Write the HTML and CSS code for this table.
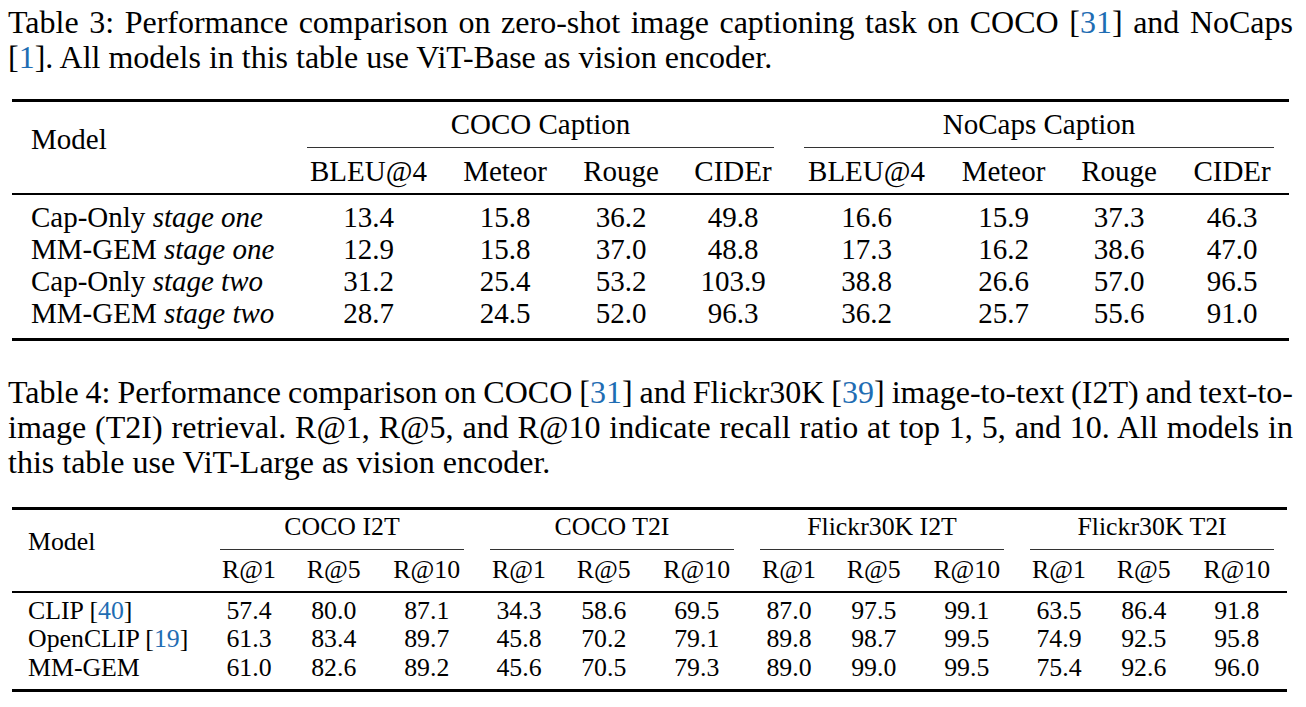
FILE: index.html
```html
<!DOCTYPE html>
<html lang="en">
<head>
<meta charset="utf-8">
<title>Tables 3 and 4</title>
<link rel="stylesheet" href="styles.css">
</head>
<body>
<div class="page">
  <p class="caption">
    <span class="line just">Table 3: Performance comparison on zero-shot image captioning task on COCO [<span class="cite">31</span>] and NoCaps</span>
    <span class="line">[<span class="cite">1</span>]. All models in this table use ViT-Base as vision encoder.</span>
  </p>

  <table class="tbl t1">
    <colgroup>
      <col class="c-model">
      <col class="c-bleu"><col class="c-meteor"><col class="c-rouge"><col class="c-cider">
      <col class="c-bleu2"><col class="c-meteor2"><col class="c-rouge"><col class="c-cider2">
    </colgroup>
    <thead>
      <tr class="r-group">
        <th class="model" rowspan="2">Model</th>
        <th class="grp" colspan="4"><div class="cmid">COCO Caption</div></th>
        <th class="grp" colspan="4"><div class="cmid">NoCaps Caption</div></th>
      </tr>
      <tr class="r-sub">
        <th>BLEU@4</th><th>Meteor</th><th>Rouge</th><th>CIDEr</th>
        <th>BLEU@4</th><th>Meteor</th><th>Rouge</th><th>CIDEr</th>
      </tr>
    </thead>
    <tbody>
      <tr><td class="lbl">Cap-Only <em>stage one</em></td><td>13.4</td><td>15.8</td><td>36.2</td><td>49.8</td><td>16.6</td><td>15.9</td><td>37.3</td><td>46.3</td></tr>
      <tr><td class="lbl">MM-GEM <em>stage one</em></td><td>12.9</td><td>15.8</td><td>37.0</td><td>48.8</td><td>17.3</td><td>16.2</td><td>38.6</td><td>47.0</td></tr>
      <tr><td class="lbl">Cap-Only <em>stage two</em></td><td>31.2</td><td>25.4</td><td>53.2</td><td>103.9</td><td>38.8</td><td>26.6</td><td>57.0</td><td>96.5</td></tr>
      <tr><td class="lbl">MM-GEM <em>stage two</em></td><td>28.7</td><td>24.5</td><td>52.0</td><td>96.3</td><td>36.2</td><td>25.7</td><td>55.6</td><td>91.0</td></tr>
    </tbody>
  </table>

  <p class="caption cap2">
    <span class="line just tight">Table 4: Performance comparison on COCO [<span class="cite">31</span>] and Flickr30K [<span class="cite">39</span>] image-to-text (I2T) and text-to-</span>
    <span class="line just">image (T2I) retrieval. R@1, R@5, and R@10 indicate recall ratio at top 1, 5, and 10. All models in</span>
    <span class="line">this table use ViT-Large as vision encoder.</span>
  </p>

  <table class="tbl t2">
    <colgroup>
      <col class="d-model">
      <col class="d-r1"><col class="d-r5"><col class="d-r10">
      <col class="d-r1"><col class="d-r5"><col class="d-r10">
      <col class="d-r1"><col class="d-r5"><col class="d-r10">
      <col class="d-r1"><col class="d-r5"><col class="d-r10">
    </colgroup>
    <thead>
      <tr class="r-group">
        <th class="model" rowspan="2">Model</th>
        <th class="grp" colspan="3"><div class="cmid">COCO I2T</div></th>
        <th class="grp" colspan="3"><div class="cmid">COCO T2I</div></th>
        <th class="grp" colspan="3"><div class="cmid">Flickr30K I2T</div></th>
        <th class="grp" colspan="3"><div class="cmid">Flickr30K T2I</div></th>
      </tr>
      <tr class="r-sub">
        <th>R@1</th><th>R@5</th><th>R@10</th>
        <th>R@1</th><th>R@5</th><th>R@10</th>
        <th>R@1</th><th>R@5</th><th>R@10</th>
        <th>R@1</th><th>R@5</th><th>R@10</th>
      </tr>
    </thead>
    <tbody>
      <tr><td class="lbl">CLIP [<span class="cite">40</span>]</td><td>57.4</td><td>80.0</td><td>87.1</td><td>34.3</td><td>58.6</td><td>69.5</td><td>87.0</td><td>97.5</td><td>99.1</td><td>63.5</td><td>86.4</td><td>91.8</td></tr>
      <tr><td class="lbl">OpenCLIP [<span class="cite">19</span>]</td><td>61.3</td><td>83.4</td><td>89.7</td><td>45.8</td><td>70.2</td><td>79.1</td><td>89.8</td><td>98.7</td><td>99.5</td><td>74.9</td><td>92.5</td><td>95.8</td></tr>
      <tr><td class="lbl">MM-GEM</td><td>61.0</td><td>82.6</td><td>89.2</td><td>45.6</td><td>70.5</td><td>79.3</td><td>89.0</td><td>99.0</td><td>99.5</td><td>75.4</td><td>92.6</td><td>96.0</td></tr>
    </tbody>
  </table>
</div>
</body>
</html>
```

FILE: styles.css
```css
html, body {
  margin: 0;
  padding: 0;
  background: #fff;
}

body {
  font-family: "Liberation Serif", "Times New Roman", serif;
  color: #000;
}

.page {
  width: 1285px;
  padding: 5px 0 0 8px;
}

.caption {
  margin: 0;
  font-size: 32px;
  line-height: 35px;
}

.caption .line {
  display: block;
  text-align: left;
}

.caption .line.just {
  text-align: justify;
  text-align-last: justify;
}

.caption .line.tight {
  word-spacing: -3.5px;
}

.cite {
  color: #1f6db3;
}

.cap2 {
  margin-top: 34px;
}

/* ---------- shared table rules ---------- */
.tbl {
  border-collapse: separate;
  border-spacing: 0;
  table-layout: fixed;
  width: 1275px;
  margin-left: 4px;
}

.tbl th,
.tbl td {
  padding: 0;
  font-weight: normal;
  text-align: center;
  white-space: nowrap;
}

.tbl .r-group th {
  border-top: 3px solid #000;
}

.tbl .model {
  text-align: left;
  vertical-align: top;
  border-bottom: 2px solid #000;
}

.tbl .r-sub th {
  border-bottom: 2px solid #000;
}

.tbl .cmid {
  border-bottom: 1px solid #333;
}

.tbl .lbl {
  text-align: left;
}

.tbl tbody tr:last-child td {
  border-bottom: 3px solid #000;
}

/* ---------- table 3 ---------- */
.t1 {
  margin-top: 24px;
  font-size: 29px;
  line-height: 32px;
}

.t1 .c-model { width: 280px; }
.t1 .c-bleu { width: 153px; }
.t1 .c-meteor { width: 120px; }
.t1 .c-rouge { width: 112px; }
.t1 .c-cider { width: 112px; }
.t1 .c-bleu2 { width: 155px; }
.t1 .c-meteor2 { width: 119px; }
.t1 .c-cider2 { width: 114px; }

.t1 .model {
  padding: 21px 0 0 19px;
}

.t1 .cmid {
  margin: 0 15px;
  padding: 6px 0 7px;
}

.t1 .r-sub th {
  padding: 7px 0 6px;
}

.t1 .lbl {
  padding-left: 19px;
}

.t1 tbody tr:first-child td {
  padding-top: 6px;
}

.t1 tbody tr:last-child td {
  padding-bottom: 9px;
}

/* ---------- table 4 ---------- */
.t2 {
  margin-top: 27px;
  font-size: 25.8px;
  line-height: 28.5px;
}

.t2 .d-model { width: 195px; }
.t2 .d-r1 { width: 84px; }
.t2 .d-r5 { width: 85.5px; }
.t2 .d-r10 { width: 100.5px; }

.t2 .model {
  padding: 18px 0 0 16px;
}

.t2 .cmid {
  margin: 0 13px;
  padding: 3px 0 7.5px;
}

.t2 .r-sub th {
  padding: 5.5px 0 6.5px;
}

.t2 .lbl {
  padding-left: 16px;
}

.t2 tbody tr:first-child td {
  padding-top: 4px;
}

.t2 tbody tr:last-child td {
  padding-bottom: 7px;
}
```
